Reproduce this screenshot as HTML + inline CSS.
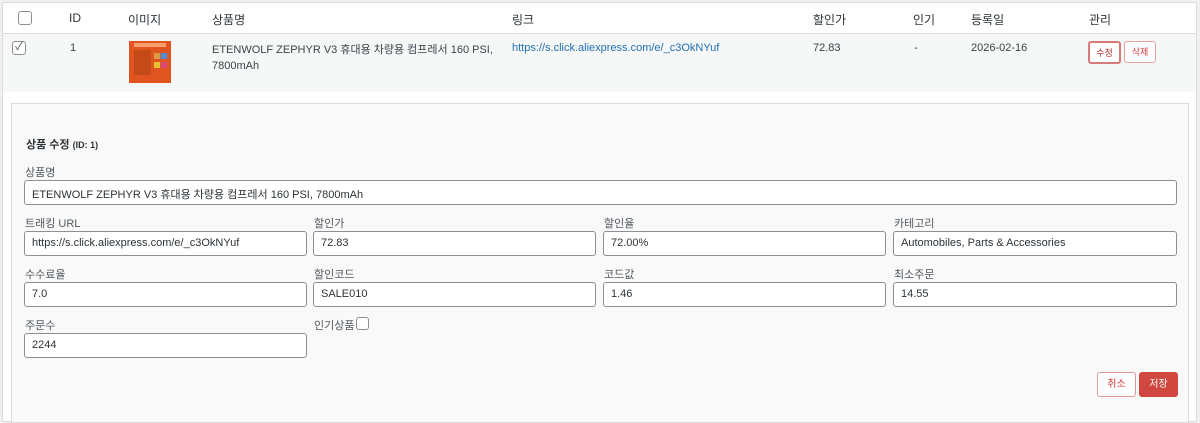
<!DOCTYPE html>
<html><head><meta charset="utf-8"><style>
*{box-sizing:border-box;margin:0;padding:0}
body{width:1200px;height:411px;background:#f0f0f1;font-family:"Liberation Sans","Noto Sans CJK KR",sans-serif;font-size:11px;color:#3c434a;position:relative;overflow:hidden}
.wrap{position:absolute;left:2px;top:2px;width:1195px;height:420px;background:#fff;border:1px solid #dcdcde}
.a{position:absolute;white-space:nowrap}
.hdr{font-size:12px;color:#2c3338}
.row{position:absolute;left:0;top:30px;width:1193px;height:59px;background:#f6f7f7;border-top:1px solid #dcdcde}
.cb{position:absolute;width:14px;height:14px;border:1px solid #8c8f94;border-radius:3px;background:#fff}
.btn{position:absolute;border:1px solid #d63638;color:#d63638;border-radius:3px;font-size:9px;text-align:center;background:#fff}
.panel{position:absolute;left:8px;top:100px;width:1178px;height:320px;background:#f9f9f9;border:1px solid #dcdcde}
.lbl{position:absolute;font-size:11px;color:#50575e}
.in{position:absolute;height:25px;border:1px solid #8c8f94;border-radius:3px;background:#fff;font-size:11px;color:#2c3338;padding:5px 7px;white-space:nowrap}
</style></head><body>
<div class="wrap">
<div class="cb" style="left:15px;top:8px"></div>
<div class="a hdr" style="left:66px;top:8px">ID</div>
<div class="a hdr" style="left:125px;top:8px">이미지</div>
<div class="a hdr" style="left:209px;top:8px">상품명</div>
<div class="a hdr" style="left:509px;top:8px">링크</div>
<div class="a hdr" style="left:810px;top:8px">할인가</div>
<div class="a hdr" style="left:910px;top:8px">인기</div>
<div class="a hdr" style="left:968px;top:8px">등록일</div>
<div class="a hdr" style="left:1086px;top:8px">관리</div>
<div class="row">
<div class="cb" style="left:9px;top:7px;font-size:11px;line-height:11px;text-align:center;color:#50575e">✓</div>
<div class="a" style="left:67px;top:8px">1</div>
<div style="position:absolute;left:126px;top:7px;width:42px;height:42px;background:#e0551f">
<div style="position:absolute;left:5px;top:9px;width:17px;height:25px;background:#c44a18"></div>
<div style="position:absolute;left:25px;top:12px;width:6px;height:6px;background:#d94"></div>
<div style="position:absolute;left:32px;top:12px;width:6px;height:6px;background:#4a8fd8"></div>
<div style="position:absolute;left:25px;top:21px;width:6px;height:6px;background:#e8c030"></div>
<div style="position:absolute;left:32px;top:21px;width:6px;height:6px;background:#d84a7a"></div>
<div style="position:absolute;left:5px;top:2px;width:32px;height:4px;background:#f6a070"></div>
</div>
<div class="a" style="left:209px;top:8px;line-height:16px">ETENWOLF ZEPHYR V3 휴대용 차량용 컴프레서 160 PSI,<br>7800mAh</div>
<div class="a" style="left:509px;top:8px;color:#2271b1">https://s.click.aliexpress.com/e/_c3OkNYuf</div>
<div class="a" style="left:810px;top:8px">72.83</div>
<div class="a" style="left:911px;top:8px">-</div>
<div class="a" style="left:968px;top:8px">2026-02-16</div>
<div class="btn" style="left:1085px;top:7px;width:33px;height:23px;line-height:21px;color:#b32d2e;border-width:2px;border-color:#d97a7a">수정</div>
<div class="btn" style="left:1121px;top:7px;width:32px;height:22px;line-height:20px;border-color:#e5a0a0">삭제</div>
</div>
<div class="panel">
<div class="a" style="left:14px;top:32px;font-size:11px;font-weight:bold;color:#2c3338">상품 수정 <span style="font-size:9px">(ID: 1)</span></div>
<div class="lbl" style="left:13px;top:60px">상품명</div>
<div class="in" style="left:12px;top:76px;width:1153px">ETENWOLF ZEPHYR V3 휴대용 차량용 컴프레서 160 PSI, 7800mAh</div>

<div class="lbl" style="left:13px;top:111px">트래킹 URL</div>
<div class="in" style="left:12px;top:127px;width:283px">https://s.click.aliexpress.com/e/_c3OkNYuf</div>
<div class="lbl" style="left:302px;top:111px">할인가</div>
<div class="in" style="left:301px;top:127px;width:283px">72.83</div>
<div class="lbl" style="left:592px;top:111px">할인율</div>
<div class="in" style="left:591px;top:127px;width:283px">72.00%</div>
<div class="lbl" style="left:882px;top:111px">카테고리</div>
<div class="in" style="left:881px;top:127px;width:284px">Automobiles, Parts &amp; Accessories</div>

<div class="lbl" style="left:13px;top:162px">수수료율</div>
<div class="in" style="left:12px;top:178px;width:283px">7.0</div>
<div class="lbl" style="left:302px;top:162px">할인코드</div>
<div class="in" style="left:301px;top:178px;width:283px">SALE010</div>
<div class="lbl" style="left:592px;top:162px">코드값</div>
<div class="in" style="left:591px;top:178px;width:283px">1.46</div>
<div class="lbl" style="left:882px;top:162px">최소주문</div>
<div class="in" style="left:881px;top:178px;width:284px">14.55</div>

<div class="lbl" style="left:13px;top:213px">주문수</div>
<div class="in" style="left:12px;top:229px;width:283px">2244</div>
<div class="lbl" style="left:302px;top:213px">인기상품</div>
<div class="cb" style="left:344px;top:213px;width:13px;height:13px"></div>

<div class="btn" style="left:1085px;top:268px;width:39px;height:25px;line-height:23px;font-size:10px;border-color:#d99">취소</div>
<div class="btn" style="left:1127px;top:268px;width:39px;height:25px;line-height:23px;font-size:10px;background:#d0473f;border-color:#d0473f;color:#fff">저장</div>
</div>
</div>
</body></html>
